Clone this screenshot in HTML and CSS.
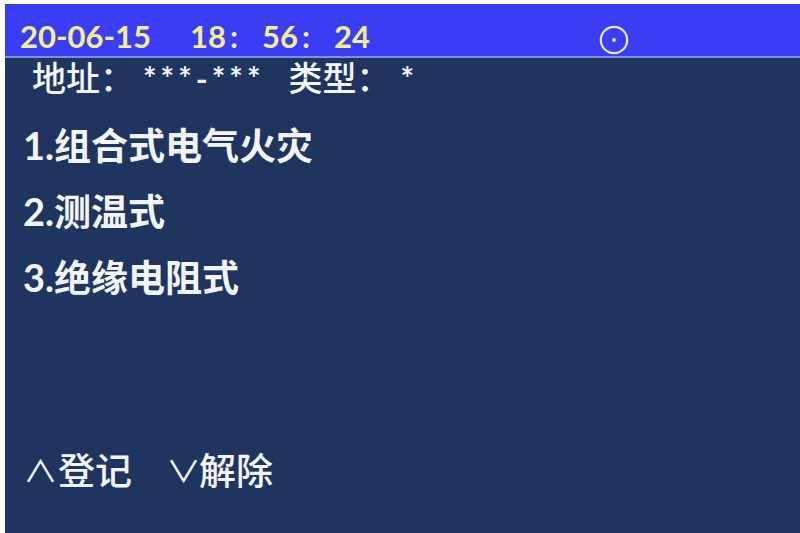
FILE: index.html
```html
<!DOCTYPE html>
<html lang="zh-CN">
<head>
<meta charset="utf-8">
<title>地址类型</title>
<link rel="stylesheet" href="styles.css">
</head>
<body>
<div class="screen">
  <div class="topbar">
    <div class="date">20-06-15</div>
    <div class="time">18<span class="colon">:</span>56<span class="colon">:</span>24</div>
    <svg class="status" width="30" height="30" viewBox="0 0 30 30" aria-hidden="true">
      <circle cx="15" cy="15" r="13.2" fill="none" stroke="#e4e6f2" stroke-width="2.2"/>
      <rect x="13.4" y="13.4" width="3.2" height="3.2" fill="#f4f4dc"/>
    </svg>
  </div>
  <div class="addr">
    <span class="cjk">地址：</span><span class="stars">***-***</span><span class="cjk type">类型：</span><span class="stars one">*</span>
  </div>
  <div class="list">
    <div class="item"><span class="num">1.</span><span class="cjk">组合式电气火灾</span></div>
    <div class="item"><span class="num">2.</span><span class="cjk">测温式</span></div>
    <div class="item"><span class="num">3.</span><span class="cjk">绝缘电阻式</span></div>
  </div>
  <div class="footer">
    <span class="arrow">∧</span><span class="cjk">登记</span><span class="arrow down">∨</span><span class="cjk">解除</span>
  </div>
</div>
</body>
</html>
```
FILE: styles.css
```css
html, body {
  margin: 0;
  padding: 0;
  background: #ffffff;
}

.screen {
  margin: 4px 0 0 5px;
  height: 529px;
  background: #1f3560;
  display: flex;
  flex-direction: column;
  color: #f3f5fb;
  font-family: "Noto Sans CJK SC", sans-serif;
}

.topbar {
  height: 52px;
  background: #3b3df4;
  border-bottom: 2px solid #7d93d8;
  display: flex;
  align-items: flex-end;
  padding-left: 15px;
  box-sizing: content-box;
}

.date, .time {
  font-family: Lato, sans-serif;
  font-weight: 700;
  font-size: 31px;
  line-height: 1;
  color: #f2ee88;
  padding-bottom: 4px;
}

.time {
  margin-left: 39px;
}

.colon {
  margin: 0 24px 0 4px;
}

.status {
  margin-left: 229px;
  margin-bottom: 1px;
}

.addr {
  margin-top: 2px;
  height: 34px;
  line-height: 34px;
  padding-left: 27px;
  font-size: 34px;
  font-weight: 500;
  white-space: nowrap;
}

.stars {
  font-family: Lato, sans-serif;
  font-weight: 700;
  font-size: 32px;
  letter-spacing: 4px;
  margin-left: 9px;
}

.type {
  margin-left: 24px;
}

.stars.one {
  margin-left: 10px;
}

.list {
  margin-top: 17px;
  padding-left: 18px;
}

.item {
  height: 66px;
  line-height: 66px;
  font-size: 37px;
  font-weight: 700;
  white-space: nowrap;
}

.num {
  font-family: Lato, sans-serif;
  font-weight: 700;
  font-size: 38px;
}

.footer {
  margin-top: auto;
  margin-bottom: 31px;
  height: 66px;
  line-height: 66px;
  padding-left: 18px;
  font-size: 37px;
  font-weight: 500;
  white-space: nowrap;
}

.arrow {
  display: inline-block;
  font-family: "Noto Sans CJK SC", sans-serif;
  font-weight: 400;
  font-size: 35px;
  line-height: 0;
  vertical-align: 1px;
  transform: scaleY(0.85);
}

.arrow.down {
  margin-left: 34px;
  margin-right: -2px;
}
```
